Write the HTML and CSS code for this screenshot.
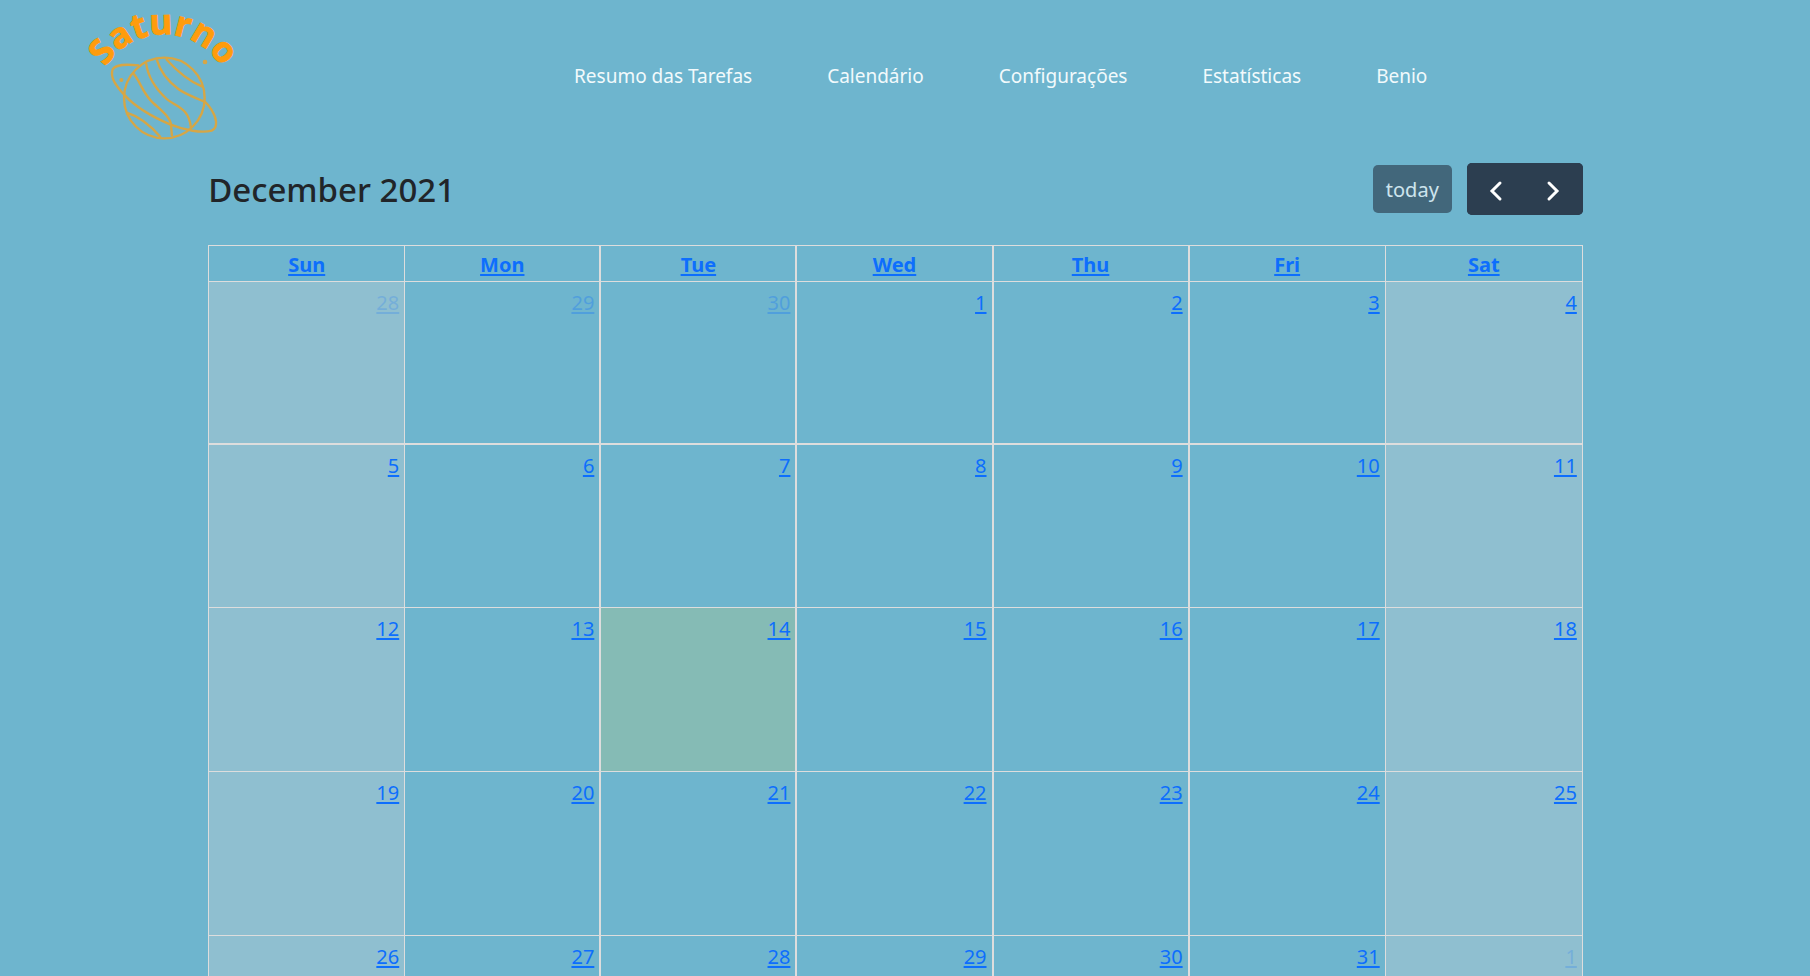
FILE: index.html
```html
<!DOCTYPE html>
<html lang="pt">
<head>
<meta charset="utf-8">
<title>Saturno</title>
<link rel="stylesheet" href="styles.css">
</head>
<body>
<header class="header">
  <a class="brand" href="#" aria-label="Saturno">
    <svg class="logo" viewBox="0 0 540 450">
      <defs><path id="arc" d="M78 306A203 203 0 0 1 484 306"/></defs>
      <text class="logo-text"><textPath href="#arc" startOffset="50%" text-anchor="middle">Saturno</textPath></text>
      <g class="planet">
        <circle cx="283" cy="294" r="121"/>
        <path d="M207 196C165 192 137 193 128 208C119 232 138 258 165 287C200 324 245 350 300 373C345 391 395 400 425 392C447 381 438 351 425 330C417 318 409 308 401 302"/>
        <path d="M190 220C211 246 218 276 242 301C265 325 302 350 303 375L306 409"/>
        <path d="M228 188C233 227 255 265 290 297C315 319 357 321 363 384"/>
        <path d="M260 178C270 213 292 242 325 267C348 284 375 292 401 304"/>
        <path d="M288 177C315 207 350 241 397 260"/>
        <path d="M170 338C210 350 245 380 272 412"/>
        <circle class="moon" cx="154" cy="240" r="6"/>
        <circle class="moon" cx="405" cy="186" r="7"/>
      </g>
    </svg>
  </a>
  <nav class="nav">
    <a href="#">Resumo das Tarefas</a>
    <a href="#">Calendário</a>
    <a href="#">Configurações</a>
    <a href="#">Estatísticas</a>
    <a href="#">Benio</a>
  </nav>
</header>
<main class="calendar">
  <div class="toolbar">
    <h2 class="title">December 2021</h2>
    <div class="controls">
      <button class="btn today-btn" disabled>today</button>
      <div class="group">
        <button class="btn" aria-label="Previous month"><svg class="chevron" viewBox="0 0 20 20"><path d="M14 4L6 12L14 20"/></svg></button>
        <button class="btn" aria-label="Next month"><svg class="chevron" viewBox="0 0 20 20"><path d="M5 4L13 12L5 20"/></svg></button>
      </div>
    </div>
  </div>
  <table class="grid">
    <thead>
      <tr><th><a href="#">Sun</a></th><th><a href="#">Mon</a></th><th><a href="#">Tue</a></th><th><a href="#">Wed</a></th><th><a href="#">Thu</a></th><th><a href="#">Fri</a></th><th><a href="#">Sat</a></th></tr>
    </thead>
    <tbody>
      <tr><td class="other"><a href="#">28</a></td><td class="other"><a href="#">29</a></td><td class="other"><a href="#">30</a></td><td><a href="#">1</a></td><td><a href="#">2</a></td><td><a href="#">3</a></td><td><a href="#">4</a></td></tr>
      <tr><td><a href="#">5</a></td><td><a href="#">6</a></td><td><a href="#">7</a></td><td><a href="#">8</a></td><td><a href="#">9</a></td><td><a href="#">10</a></td><td><a href="#">11</a></td></tr>
      <tr><td><a href="#">12</a></td><td><a href="#">13</a></td><td class="today"><a href="#">14</a></td><td><a href="#">15</a></td><td><a href="#">16</a></td><td><a href="#">17</a></td><td><a href="#">18</a></td></tr>
      <tr><td><a href="#">19</a></td><td><a href="#">20</a></td><td><a href="#">21</a></td><td><a href="#">22</a></td><td><a href="#">23</a></td><td><a href="#">24</a></td><td><a href="#">25</a></td></tr>
      <tr><td><a href="#">26</a></td><td><a href="#">27</a></td><td><a href="#">28</a></td><td><a href="#">29</a></td><td><a href="#">30</a></td><td><a href="#">31</a></td><td class="other"><a href="#">1</a></td></tr>
    </tbody>
  </table>
</main>
</body>
</html>
```
FILE: styles.css
```css
* { box-sizing: border-box; }
body {
  margin: 0;
  height: 100vh;
  overflow: hidden;
  background: #6eb5ce;
  color: #212529;
  font: 20px/30px "Segoe UI", "Noto Sans", "Open Sans", sans-serif;
}
.header { display: flex; height: 150px; padding-left: 70px; }
.brand { display: block; width: 180px; height: 150px; }
.logo { display: block; width: 100%; height: 100%; overflow: visible; }
.logo-text { font: 700 105px "Open Sans", sans-serif; fill: #ff9c0c; stroke: #ff9c0c; stroke-width: 3; }
.planet { fill: none; stroke: #d6a645; stroke-width: 7; }
.planet .moon { fill: #d6a645; stroke: none; }
.nav {
  flex: 1;
  display: flex;
  align-items: center;
  gap: 75px;
  padding: 2px 0 0 324px;
}
.nav a { color: #f2fafc; text-decoration: none; font-size: 19px; }
.calendar { width: 75.95%; margin-left: 11.5%; }
.toolbar {
  display: flex;
  align-items: center;
  justify-content: space-between;
  padding: 13px 0 30px;
}
.title { margin: 0; padding-top: 2px; font-size: 33px; font-weight: 500; line-height: 48px; }
.controls { display: flex; align-items: center; gap: 15px; }
.group { display: flex; border-radius: 5px; overflow: hidden; background: #2c3e50; }
.btn {
  display: flex;
  align-items: center;
  justify-content: center;
  width: 58px;
  height: 52px;
  padding: 0;
  border: 0;
  background: #2c3e50;
  color: #fff;
  font: inherit;
}
.today-btn { width: 79px; height: 48px; padding-top: 2px; border-radius: 5px; opacity: .65; }
.chevron { width: 20px; height: 20px; overflow: visible; fill: none; stroke: #fff; stroke-width: 3; stroke-linecap: round; }
.grid {
  width: 100%;
  table-layout: fixed;
  border-collapse: separate;
  border-spacing: 0;
  border: 1px solid #ddd;
  border-bottom: 0;
}
.grid th { height: 35px; padding: 4px 0 1px; }
.grid td {
  height: 164px;
  padding: 6px 5px;
  border-top: 1px solid #ddd;
  text-align: right;
  vertical-align: top;
}
.grid tbody tr:first-child td { height: 162px; }
.grid tbody tr:nth-child(2) td { border-top-width: 2px; }
.grid th, .grid td { border-right: 2px solid #ddd; }
.grid tr > :first-child, .grid tr > :nth-child(6) { border-right-width: 1px; }
.grid tr > :last-child { border-right: 0; }
.grid td:first-child, .grid td:last-child { background: #8fbfd0; }
.grid td.today { background: #85bbb5; }
.grid a { color: #0d6efd; text-underline-offset: 2px; }
.grid .other a { opacity: .3; }
.grid .other:first-child a, .grid .other:last-child a { opacity: .2; }
```
